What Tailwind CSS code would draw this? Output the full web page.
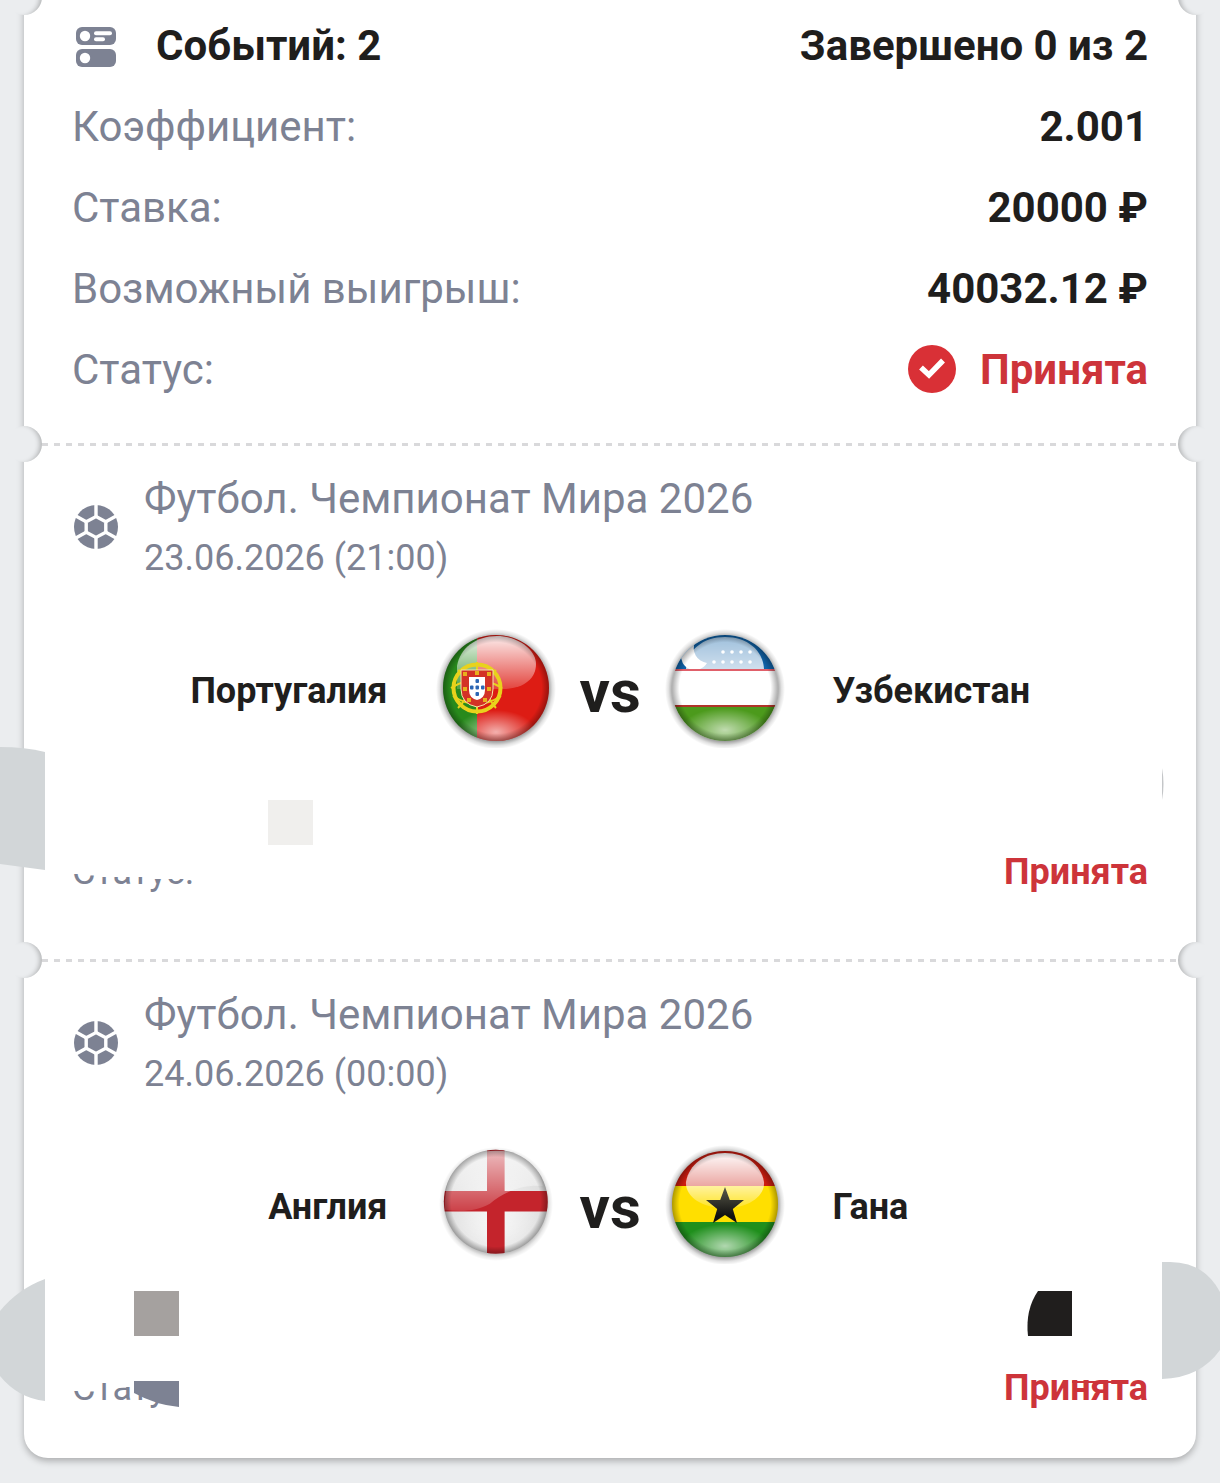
<!DOCTYPE html>
<html lang="ru">
<head>
    <meta charset="UTF-8">
    <meta name="viewport" content="width=device-width, initial-scale=1.0">
    <title>Купон</title>
    <script src="https://cdn.jsdelivr.net/npm/@tailwindcss/browser@4"></script>
</head>
<body class="bg-[#ebedef] text-[#1f1e1d] font-['Roboto',sans-serif] min-h-screen overflow-x-hidden">
    <!-- shared svg definitions -->
    <svg class="absolute size-0" aria-hidden="true">
        <defs>
            <clipPath id="ball"><circle cx="60" cy="60" r="53"/></clipPath>
            <linearGradient id="gloss" x1="0" y1="0" x2="0" y2="1">
                <stop offset="0" stop-color="#fff" stop-opacity=".92"/>
                <stop offset="1" stop-color="#fff" stop-opacity=".18"/>
            </linearGradient>
            <linearGradient id="glossStrong" x1="0" y1="0" x2="0" y2="1">
                <stop offset="0" stop-color="#fff" stop-opacity=".6"/>
                <stop offset="1" stop-color="#fff" stop-opacity=".8"/>
            </linearGradient>
            <linearGradient id="glossGhana" x1="0" y1="0" x2="0" y2="1">
                <stop offset="0" stop-color="#fff" stop-opacity=".98"/>
                <stop offset=".62" stop-color="#fff" stop-opacity=".6"/>
                <stop offset="1" stop-color="#fff" stop-opacity=".15"/>
            </linearGradient>
            <radialGradient id="glow" cx=".5" cy=".5" r=".5">
                <stop offset="0" stop-color="#fff" stop-opacity=".65"/>
                <stop offset="1" stop-color="#fff" stop-opacity="0"/>
            </radialGradient>
            <radialGradient id="rim" cx=".5" cy=".5" r=".5">
                <stop offset=".86" stop-color="#000" stop-opacity="0"/>
                <stop offset="1" stop-color="#000" stop-opacity=".32"/>
            </radialGradient>
            <radialGradient id="halo" cx=".5" cy=".5" r=".5">
                <stop offset=".86" stop-color="#000" stop-opacity=".42"/>
                <stop offset=".94" stop-color="#000" stop-opacity=".12"/>
                <stop offset="1" stop-color="#000" stop-opacity="0"/>
            </radialGradient>
            <linearGradient id="star" x1="0" y1="0" x2="0" y2="1">
                <stop offset="0" stop-color="#5a5a4a"/>
                <stop offset=".8" stop-color="#111"/>
            </linearGradient>
            <symbol id="soccer" viewBox="0 0 48 48">
                <circle cx="24" cy="24" r="22" fill="#7d8293"/>
                <g fill="none" stroke="#fff" stroke-width="3.4">
                    <path d="M24 13.6 33.8 18.8V29.2L24 34.4 14.2 29.2V18.800Z"/>
                    <path d="M24 14V0M24 34V48M33.8 18.8 46 12M33.8 29.2 46 36M14.2 18.8 2 12M14.2 29.2 2 36"/>
                </g>
            </symbol>
        </defs>
    </svg>

    <main class="mx-6 mb-6 bg-white rounded-b-3xl shadow-[0_3px_7px_rgba(0,0,0,0.28)]">
        <div class="relative h-9 -mt-[21px]">
            <span class="absolute -left-[18px] size-9 rounded-full bg-[#ebedef] shadow-[inset_-5px_0_5px_-3px_rgba(0,0,0,0.25)]"></span>
            <span class="absolute -right-[18px] size-9 rounded-full bg-[#ebedef] shadow-[inset_5px_0_5px_-3px_rgba(0,0,0,0.25)]"></span>
        </div>

        <!-- coupon summary -->
        <section class="px-12 pt-[6px] pb-8 flex flex-col gap-8 text-[42px] leading-[49px]">
            <div class="flex items-center justify-between font-bold">
                <div class="flex items-center gap-9">
                    <svg class="size-12" viewBox="0 0 48 48" fill="#7d8293">
                        <rect x="4" y="5" width="40" height="18" rx="6"/>
                        <rect x="4" y="27" width="40" height="18" rx="6"/>
                        <g fill="#fff">
                            <circle cx="13" cy="14" r="5.2"/>
                            <circle cx="13" cy="36" r="5.2"/>
                            <rect x="22" y="9.2" width="18" height="4" rx="2"/>
                            <rect x="22" y="15.200" width="11" height="4" rx="2"/>
                        </g>
                    </svg>
                    <h1>Событий: 2</h1>
                </div>
                <span>Завершено 0 из 2</span>
            </div>
            <div class="flex justify-between">
                <span class="text-[#7d8293]">Коэффициент:</span>
                <span class="font-bold">2.001</span>
            </div>
            <div class="flex justify-between">
                <span class="text-[#7d8293]">Ставка:</span>
                <span class="font-bold">20000 ₽</span>
            </div>
            <div class="flex justify-between">
                <span class="text-[#7d8293]">Возможный выигрыш:</span>
                <span class="font-bold">40032.12 ₽</span>
            </div>
            <div class="flex justify-between">
                <span class="text-[#7d8293]">Статус:</span>
                <span class="flex gap-6 font-bold text-[#cd343a]">
                    <svg class="size-12" viewBox="0 0 48 48">
                        <circle cx="24" cy="24" r="24" fill="#d93036"/>
                        <path d="M13 22.500 21 30 35 15.500" fill="none" stroke="#fff" stroke-width="5.500"/>
                    </svg>
                    Принята
                </span>
            </div>
        </section>

        <div class="relative h-9 flex items-center">
            <span class="absolute -left-[18px] size-9 rounded-full bg-[#ebedef] shadow-[inset_-5px_0_5px_-3px_rgba(0,0,0,0.25)]"></span>
            <span class="mx-[18px] grow h-[3px] bg-[repeating-linear-gradient(90deg,#d9d9db_0_6px,transparent_6px_12px)]"></span>
            <span class="absolute -right-[18px] size-9 rounded-full bg-[#ebedef] shadow-[inset_5px_0_5px_-3px_rgba(0,0,0,0.25)]"></span>
        </div>

        <!-- event 1 -->
        <article class="relative px-12 pt-3 pb-[49px]">
            <div class="flex items-center gap-6 text-[#7d8293]">
                <svg class="size-12"><use href="#soccer"/></svg>
                <div class="flex flex-col gap-[14px]">
                    <h2 class="text-[42px] leading-[49px]">Футбол. Чемпионат Мира 2026</h2>
                    <time class="text-[36px] leading-[42px]">23.06.2026 (21:00)</time>
                </div>
            </div>
            <div class="mt-[49px] grid grid-cols-[1fr_auto_1fr] items-center gap-12 text-[36px] leading-[42px] font-bold">
                <span class="pt-[6px] text-right">Португалия</span>
                <div class="flex items-center gap-6">
                    <svg class="size-[120px]" viewBox="0 0 120 120">
                        <circle cx="60" cy="61" r="60" fill="url(#halo)"/>
                        <g clip-path="url(#ball)">
                            <rect width="41" height="120" fill="#288a1c"/>
                            <rect x="41" width="79" height="120" fill="#dd1c14"/>
                            <ellipse cx="60" cy="104" rx="40" ry="22" fill="url(#glow)"/>
                            <path d="M21 38C24 20 40 8 61 8S100 22 100 36C100 52 86 61 66 61H21Z" fill="url(#gloss)"/>
                            <g fill="none" stroke="#e8d21c">
                                <circle cx="41" cy="60" r="23.500" stroke-width="4"/>
                                <path d="M41 34V86M15 60Q40 44 66 60M17 68Q41 84 65 68M22 42Q42 60 22 80M60 42Q42 60 60 80" stroke-width="2"/>
                            </g>
                            <path d="M25 42H57V61Q57 76 41 79Q25 76 25 61Z" fill="#d33226" stroke="#f3e6a8" stroke-width="1"/>
                            <path d="M33 49H49V62Q49 70 41 72Q33 70 33 62Z" fill="#fff"/>
                            <g fill="#2c66b4">
                                <rect x="39.500" y="51" width="3.500" height="4" rx="1"/>
                                <rect x="34" y="57.500" width="3.500" height="4" rx="1"/>
                                <rect x="39.500" y="57.500" width="3.500" height="4" rx="1"/>
                                <rect x="45" y="57.500" width="3.500" height="4" rx="1"/>
                                <rect x="39.500" y="64" width="3.500" height="4" rx="1"/>
                            </g>
                            <g fill="#e8b01c">
                                <rect x="27" y="44" width="4" height="4"/>
                                <rect x="39" y="43" width="4" height="4"/>
                                <rect x="51" y="44" width="4" height="4"/>
                                <rect x="27" y="59" width="4" height="4"/>
                                <rect x="51" y="59" width="4" height="4"/>
                                <rect x="31" y="70" width="4" height="4"/>
                                <rect x="47" y="70" width="4" height="4"/>
                            </g>
                        </g>
                        <circle cx="60" cy="60" r="53" fill="url(#rim)"/>
                    </svg>
                    <span class="w-[61px] pt-2 text-center text-[60px] leading-[70px]">vs</span>
                    <svg class="size-[120px]" viewBox="0 0 120 120">
                        <circle cx="60" cy="61" r="60" fill="url(#halo)"/>
                        <g clip-path="url(#ball)">
                            <rect width="120" height="120" fill="#fff"/>
                            <rect width="120" height="41" fill="#0f62a8"/>
                            <path d="M21 41C22 22 38 9 60 9S98 22 99 41Z" fill="url(#glossStrong)"/>
                            <path d="M30 14A14 14 0 1 0 42 35A15 15 0 0 1 30 14Z" fill="#fff"/>
                            <g fill="#fff">
                                <circle cx="58" cy="24" r="1.800"/><circle cx="67" cy="24" r="1.800"/><circle cx="76" cy="24" r="1.800"/><circle cx="85" cy="24" r="1.800"/>
                                <circle cx="49" cy="34" r="1.800"/><circle cx="58" cy="34" r="1.800"/><circle cx="67" cy="34" r="1.800"/><circle cx="76" cy="34" r="1.800"/><circle cx="85" cy="34" r="1.800"/>
                            </g>
                            <rect y="41" width="120" height="2" fill="#e0606a"/>
                            <rect y="77" width="120" height="43" fill="#4c9a1c"/>
                            <rect y="77" width="120" height="2" fill="#b0342a"/>
                            <ellipse cx="60" cy="102" rx="44" ry="22" fill="url(#glow)"/>
                        </g>
                        <circle cx="60" cy="60" r="53" fill="url(#rim)"/>
                    </svg>
                </div>
                <span class="pt-[6px]">Узбекистан</span>
            </div>
            <div class="mt-[103px] flex justify-between text-[36px] leading-[42px]">
                <span class="text-[#7d8293]">Статус:</span>
                <span class="font-bold text-[#cd343a]">Принята</span>
            </div>

            <!-- patches that lie over the row -->
            <svg class="absolute -left-6 top-[280px] w-[360px] h-[150px]" viewBox="0 0 360 150">
                <path d="M0 5Q25 5 45 10V128L0 122Z" fill="#d2d6d8"/>
                <rect x="268" y="58" width="45" height="45" fill="#f0efed"/>
                <path d="M60 106H210V137H146V135H96V132H60Z" fill="#fff"/>
            </svg>
            <svg class="absolute right-8 top-[304px] w-1 h-9" viewBox="0 0 4 36">
                <path d="M2 2Q5 18 2 34Z" fill="#c4c6c8"/>
            </svg>
        </article>

        <div class="relative h-9 flex items-center">
            <span class="absolute -left-[18px] size-9 rounded-full bg-[#ebedef] shadow-[inset_-5px_0_5px_-3px_rgba(0,0,0,0.25)]"></span>
            <span class="mx-[18px] grow h-[3px] bg-[repeating-linear-gradient(90deg,#d9d9db_0_6px,transparent_6px_12px)]"></span>
            <span class="absolute -right-[18px] size-9 rounded-full bg-[#ebedef] shadow-[inset_5px_0_5px_-3px_rgba(0,0,0,0.25)]"></span>
        </div>

        <!-- event 2 -->
        <article class="relative px-12 pt-3 pb-[49px]">
            <div class="flex items-center gap-6 text-[#7d8293]">
                <svg class="size-12"><use href="#soccer"/></svg>
                <div class="flex flex-col gap-[14px]">
                    <h2 class="text-[42px] leading-[49px]">Футбол. Чемпионат Мира 2026</h2>
                    <time class="text-[36px] leading-[42px]">24.06.2026 (00:00)</time>
                </div>
            </div>
            <div class="mt-[49px] grid grid-cols-[1fr_auto_1fr] items-center gap-12 text-[36px] leading-[42px] font-bold">
                <span class="pt-[6px] text-right">Англия</span>
                <div class="flex items-center gap-6">
                    <svg class="size-[120px]" viewBox="0 0 120 120">
                        <circle cx="60" cy="60" r="57" fill="url(#halo)" opacity=".7"/>
                        <g transform="translate(1 -1) scale(.98)">
                            <g clip-path="url(#ball)">
                                <rect width="120" height="120" fill="#dedede"/>
                                <ellipse cx="60" cy="88" rx="56" ry="44" fill="url(#glow)"/>
                                <ellipse cx="60" cy="60" rx="48" ry="48" fill="url(#glow)"/>
                                <path d="M51 0H69V49H120V70H69V120H51V70H0V49H51Z" fill="#c4242c"/>
                                <path d="M8 68C8 20 30 8 60 8S104 22 108 44C84 42 66 52 54 62C40 70 24 70 8 68Z" fill="url(#gloss)" opacity=".75"/>
                            </g>
                            <circle cx="60" cy="60" r="53" fill="url(#rim)"/>
                        </g>
                    </svg>
                    <span class="w-[61px] pt-2 text-center text-[60px] leading-[70px]">vs</span>
                    <svg class="size-[120px]" viewBox="0 0 120 120">
                        <circle cx="60" cy="61" r="60" fill="url(#halo)"/>
                        <g clip-path="url(#ball)">
                            <rect width="120" height="42" fill="#cc1c10"/>
                            <rect y="42" width="120" height="36" fill="#ffdf00"/>
                            <rect y="78" width="120" height="42" fill="#1f8f1c"/>
                            <ellipse cx="60" cy="102" rx="44" ry="22" fill="url(#glow)"/>
                            <path d="M21 38C24 20 40 9 60 9S96 20 99 38C100 52 84 64 60 64S20 52 21 38Z" fill="url(#glossGhana)"/>
                            <path d="M60 43 64.800 56H79L67.800 65 72 79 60 71 48 79 52.200 65 41 56H55.200Z" fill="url(#star)"/>
                        </g>
                        <circle cx="60" cy="60" r="53" fill="url(#rim)"/>
                    </svg>
                </div>
                <span class="pt-[6px]">Гана</span>
            </div>
            <div class="mt-[103px] flex justify-between text-[36px] leading-[42px]">
                <span class="text-[#7d8293]">Статус:</span>
                <span class="font-bold text-[#cd343a]">Принята</span>
            </div>

            <!-- patches that lie over the row -->
            <svg class="absolute -left-6 top-[290px] w-[240px] h-[150px]" viewBox="0 0 240 150">
                <path d="M45 11Q18 21 0 43V108Q18 130 45 133Z" fill="#d2d6d8"/>
                <rect x="134" y="23" width="45" height="45" fill="#a5a19f"/>
                <path d="M60 90H210V143H166V136L134 124V119H112V115H97V123H60Z" fill="#fff"/>
                <path d="M134 113H179V139Q156 137 134 125Z" fill="#7d8293"/>
            </svg>
            <svg class="absolute right-[76px] top-[310px] w-[100px] h-[100px]" viewBox="0 0 100 100">
                <path d="M18 3H52V48H8Q5 22 18 3Z" fill="#201e1d"/>
                <rect x="52" y="93" width="45" height="2" fill="#cd343a"/>
            </svg>
            <svg class="absolute -right-6 top-[284px] w-[58px] h-[118px]" viewBox="0 0 58 118">
                <path d="M0 0H8Q42 0 58 30V88Q38 116 0 117Z" fill="#d2d6d8"/>
            </svg>
        </article>
    </main>
</body>
</html>
